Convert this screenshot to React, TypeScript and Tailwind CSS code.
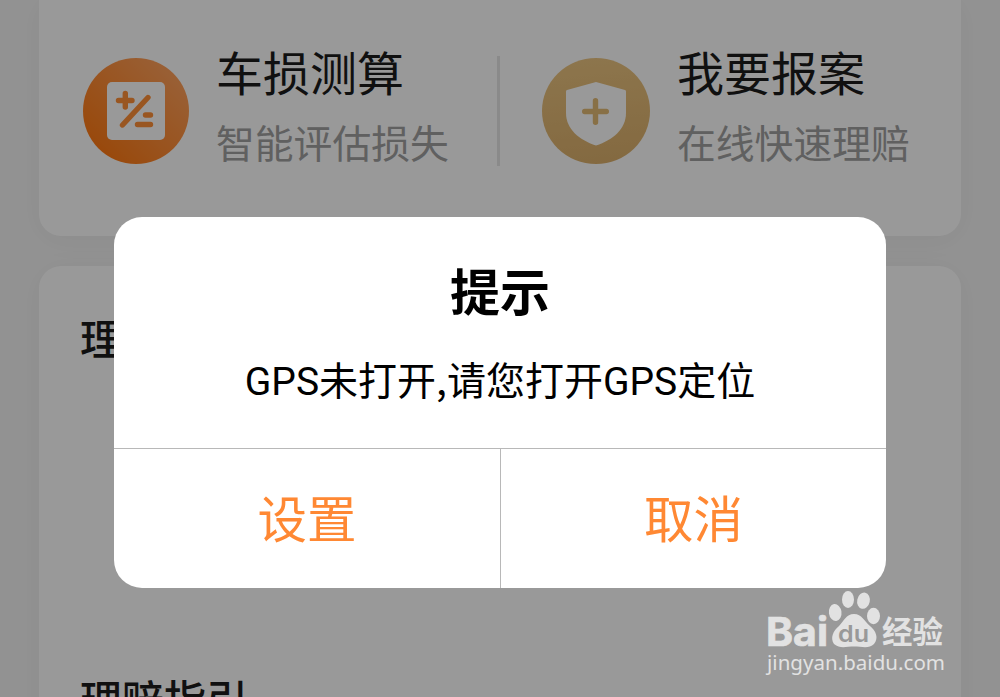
import type { ReactNode } from 'react'

interface ServiceProps {
  icon: ReactNode
  title: string
  desc: string
}

function EstimateIcon() {
  return (
    <svg width="106" height="106" viewBox="0 0 106 106" fill="none">
      <defs>
        <linearGradient id="estimate" x1="15" y1="91" x2="91" y2="15" gradientUnits="userSpaceOnUse">
          <stop stopColor="#ff7a14" />
          <stop offset="1" stopColor="#ffa05a" />
        </linearGradient>
      </defs>
      <circle cx="53" cy="53" r="53" fill="url(#estimate)" />
      <rect x="24" y="24" width="58" height="58" rx="5" fill="#fff" />
      <g stroke="#ff9038" strokeWidth="5.4" strokeLinecap="round">
        <path d="M35.5 42.5h13.5M42.3 35.5v13.5M39.5 67L65 39.5M62.5 57h5M54.5 66.5h13" />
      </g>
    </svg>
  )
}

function ReportIcon() {
  return (
    <svg width="108" height="106" viewBox="0 0 108 106" fill="none">
      <defs>
        <linearGradient id="report" x1="48" y1="0" x2="58" y2="106" gradientUnits="userSpaceOnUse">
          <stop stopColor="#ebc480" />
          <stop offset="1" stopColor="#dcb06c" />
        </linearGradient>
      </defs>
      <ellipse cx="54" cy="53" rx="54" ry="53" fill="url(#report)" />
      <path d="M54 24L83 32Q84 32.3 84 33.5V55C84 71 71 82 54 87.5C37 82 24 71 24 55V33.5Q24 32.3 25 32Z" fill="#fff" />
      <path d="M42.7 53.5h21.6M53.5 42.7v21.6" stroke="#e3bb76" strokeWidth="5.4" strokeLinecap="round" />
    </svg>
  )
}

function Service({ icon, title, desc }: ServiceProps) {
  return (
    <div className="flex items-center">
      {icon}
      <div className="-mt-[3px] ml-[27px] whitespace-nowrap">
        <p className="text-[47px] leading-[70px] text-[#1c1c1c]">{title}</p>
        <p className="text-[38.8px] leading-[70px] text-[#a0a0a0]">{desc}</p>
      </div>
    </div>
  )
}

function Watermark() {
  return (
    <svg className="absolute left-[764px] top-[588px]" width="184" height="90" viewBox="0 0 184 90" fill="#e2e2e2">
      <text x="2" y="57.5" stroke="#e2e2e2" strokeWidth="0.7" fontFamily="Inter" fontWeight="700" fontSize="40" textLength="62" lengthAdjust="spacingAndGlyphs">Bai</text>
      <ellipse cx="71.2" cy="24.5" rx="6.3" ry="8.5" transform="rotate(-8 71.2 24.5)" />
      <ellipse cx="84" cy="11.5" rx="6" ry="8.5" />
      <ellipse cx="99.5" cy="12.7" rx="6.3" ry="8.2" transform="rotate(12 99.5 12.7)" />
      <ellipse cx="109.5" cy="28" rx="6.5" ry="8.3" />
      <path d="M90 26C98 26 100 33 106 38C112 43 115 50 110 56C105 61 98 58.5 90 58.5C82 58.5 76 61 70 56C66 50 69 43 75 38C80 33 82 26 90 26Z" />
      <text x="74" y="53.5" fill="#999" fontFamily="Inter" fontWeight="600" fontSize="23" textLength="31" lengthAdjust="spacingAndGlyphs">du</text>
      <text x="118" y="55" fontFamily="Noto Sans CJK SC" fontWeight="700" fontSize="30.5" textLength="61" lengthAdjust="spacingAndGlyphs">经验</text>
      <text x="3" y="82" fontFamily="Noto Sans" fontSize="20.5" textLength="178">jingyan.baidu.com</text>
    </svg>
  )
}

export default function App() {
  return (
    <div className="relative h-[697px] w-[1000px] overflow-hidden bg-[#f4f4f4] font-['Roboto','Noto_Sans_CJK_SC',sans-serif]">
      <div className="mx-[39px] flex h-[236px] rounded-b-[22px] bg-white pl-11 pt-10 shadow-[0_4px_30px_rgba(0,0,0,0.04)]">
        <div className="flex h-[142px] w-[414px] items-center">
          <Service icon={<EstimateIcon />} title="车损测算" desc="智能评估损失" />
        </div>
        <div className="mt-4 h-[110px] w-[3px] bg-[#e6e6e6]" />
        <div className="ml-[42px] flex h-[142px] items-center">
          <Service icon={<ReportIcon />} title="我要报案" desc="在线快速理赔" />
        </div>
      </div>

      <div className="mx-[39px] mt-[30px] h-[500px] rounded-t-[22px] bg-white px-[41px] pt-[45px] text-[42px] font-medium leading-[60px] text-[#1c1c1c] shadow-[0_4px_30px_rgba(0,0,0,0.04)]">
        <h2>理赔</h2>
        <h2 className="mt-[301px]">理赔指引</h2>
      </div>

      <div className="absolute inset-0 bg-black/40" />

      <div className="absolute left-[114px] top-[217px] flex h-[371px] w-[772px] flex-col overflow-hidden rounded-[28px] bg-white text-center">
        <div className="h-[231px] pt-[41px]">
          <h1 className="text-[50px] font-bold leading-[72px] text-black">提示</h1>
          <p className="mt-5 text-[39px] leading-[56px] text-black">
            GPS未打开<span className="font-['Noto_Sans_CJK_SC',sans-serif]">,</span>请您打开GPS定位
          </p>
        </div>
        <div className="flex flex-1 border-t border-[#b8b8b8] text-[49.5px] text-[#ff8833]">
          <button className="w-[387px] border-r border-[#b8b8b8] pt-1.5">设置</button>
          <button className="flex-1 pt-1.5">取消</button>
        </div>
      </div>

      <Watermark />
    </div>
  )
}
